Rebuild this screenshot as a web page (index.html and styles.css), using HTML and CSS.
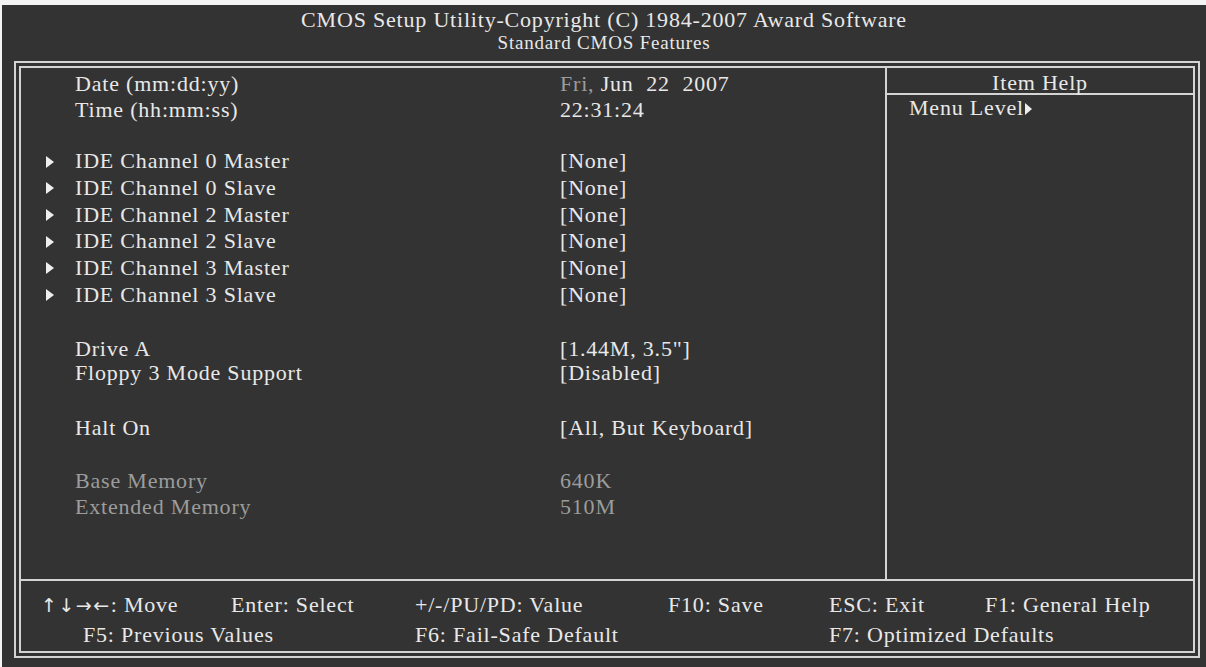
FILE: index.html
```html
<!DOCTYPE html>
<html lang="en">
<head>
    <meta charset="UTF-8">
    <meta name="viewport" content="width=device-width, initial-scale=1.0">
    <title>Standard CMOS Features</title>
    <link rel="stylesheet" href="styles.css">
</head>
<body>

    <div class="screen">
        <!-- title lines -->
        <div class="title">
            <div class="title-main">CMOS Setup Utility-Copyright (C) 1984-2007 Award Software</div>
            <div class="title-sub">Standard CMOS Features</div>
        </div>

        <div class="frame">
            <div class="frame-inner">
                <div class="main">
                    <!-- setup items -->
                    <div class="items">
                        <div class="group g-time">
                            <div class="row"><span></span><span>Date (mm:dd:yy)</span><span class="value"><span class="dim">Fri,</span> Jun  22  2007</span></div>
                            <div class="row"><span></span><span>Time (hh:mm:ss)</span><span class="value">22:31:24</span></div>
                        </div>
                        <div class="group g-ide">
                            <div class="row"><span class="mark"></span><span>IDE Channel 0 Master</span><span class="value">[None]</span></div>
                            <div class="row"><span class="mark"></span><span>IDE Channel 0 Slave</span><span class="value">[None]</span></div>
                            <div class="row"><span class="mark"></span><span>IDE Channel 2 Master</span><span class="value">[None]</span></div>
                            <div class="row"><span class="mark"></span><span>IDE Channel 2 Slave</span><span class="value">[None]</span></div>
                            <div class="row"><span class="mark"></span><span>IDE Channel 3 Master</span><span class="value">[None]</span></div>
                            <div class="row"><span class="mark"></span><span>IDE Channel 3 Slave</span><span class="value">[None]</span></div>
                        </div>
                        <div class="group g-floppy">
                            <div class="row"><span></span><span>Drive A</span><span class="value">[1.44M, 3.5"]</span></div>
                            <div class="row"><span></span><span>Floppy 3 Mode Support</span><span class="value">[Disabled]</span></div>
                        </div>
                        <div class="group g-halt">
                            <div class="row"><span></span><span>Halt On</span><span class="value">[All, But Keyboard]</span></div>
                        </div>
                        <div class="group g-mem dim">
                            <div class="row"><span></span><span>Base Memory</span><span class="value">640K</span></div>
                            <div class="row"><span></span><span>Extended Memory</span><span class="value">510M</span></div>
                        </div>
                    </div>

                    <!-- help panel -->
                    <div class="help">
                        <div class="help-title">Item Help</div>
                        <div class="help-body">Menu Level<span class="help-arrow"></span></div>
                    </div>
                </div>

                <!-- key legend -->
                <div class="keys">
                    <span class="k-move"><span class="arrows">&uarr;&darr;&rarr;&larr;</span>: Move</span>
                    <span>Enter: Select</span>
                    <span>+/-/PU/PD: Value</span>
                    <span>F10: Save</span>
                    <span>ESC: Exit</span>
                    <span>F1: General Help</span>
                    <span class="k-f5">F5: Previous Values</span>
                    <span class="k-f6">F6: Fail-Safe Default</span>
                    <span class="k-f7">F7: Optimized Defaults</span>
                </div>
            </div>
        </div>
    </div>

</body>
</html>
```

FILE: styles.css
```css
body {
    margin: 0;
    background: #f4f4f4;
    font-family: "Liberation Serif", "Times New Roman", serif;
    font-size: 22px;
    letter-spacing: 0.8px;
    color: #e8e8e8;
}

.screen {
    margin: 5px 0 0 2px;
    height: 662px;
    background: #333;
    overflow: hidden;
}

/* Title */
.title {
    padding-top: 3px;
    text-align: center;
}
.title-main {
    line-height: 24px;
}
.title-sub {
    font-size: 19px;
    line-height: 20px;
    margin-top: 1px;
}

/* Double line frame */
.frame {
    margin: 8px 6px 0 12px;
    border: 2px solid #d4d4d4;
    padding: 3px;
}
.frame-inner {
    border: 2px solid #d4d4d4;
}

.main {
    display: flex;
    height: 511px;
    border-bottom: 2px solid #d4d4d4;
}

/* Items column */
.items {
    flex: 1;
    padding: 2.6px 0 0 25px;
    border-right: 2px solid #d4d4d4;
}
.row {
    display: grid;
    grid-template-columns: 29px 485px 1fr;
    align-items: center;
    line-height: 26.7px;
    white-space: pre;
}
.mark {
    width: 0;
    height: 0;
    border-left: 8px solid #eee;
    border-top: 6.5px solid transparent;
    border-bottom: 6.5px solid transparent;
}
.dim {
    color: #9c9c9c;
}

.g-ide { margin-top: 24.3px; }
.g-floppy { margin-top: 28.4px; }
.g-floppy .row { line-height: 24.4px; }
.g-halt { margin-top: 29px; }
.g-mem { margin-top: 26.3px; }

/* Help column */
.help {
    width: 306px;
}
.help-title {
    padding-top: 5px;
    line-height: 20px;
    text-align: center;
    border-bottom: 2px solid #d4d4d4;
}
.help-body {
    padding-left: 22px;
    line-height: 26.7px;
}
.help-arrow {
    display: inline-block;
    width: 0;
    height: 0;
    margin-left: 1px;
    border-left: 7px solid #eee;
    border-top: 6px solid transparent;
    border-bottom: 6px solid transparent;
}

/* Key legend */
.keys {
    height: 70px;
    box-sizing: border-box;
    padding: 9.5px 0 0 20px;
    display: grid;
    grid-template-columns: 42px 148px 184px 253px 161px 156px 1fr;
    line-height: 27px;
    white-space: nowrap;
}
.arrows {
    font-family: "DejaVu Sans", sans-serif;
    font-size: 19px;
    letter-spacing: 1.5px;
}
.k-move { grid-column: 1 / 3; }
.k-f5 { grid-column: 2 / 4; }
.k-f6 { grid-column: 4 / 6; }
.k-f7 { grid-column: 6 / 8; }
```
